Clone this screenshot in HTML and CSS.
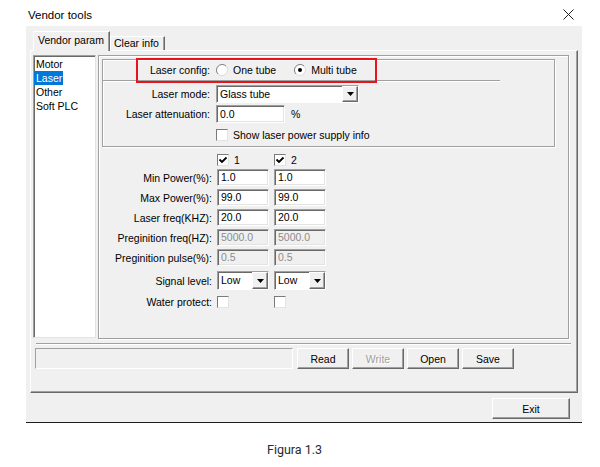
FILE: index.html
```html
<!DOCTYPE html>
<html lang="en">
    <head>
        <meta charset="utf-8">
        <title>Vendor tools</title>
        <link rel="stylesheet" href="styles.css">
    </head>
    <body>
        <div class="window">
            <div class="titlebar">
                <span class="title">Vendor tools</span>
                <svg class="close" width="11" height="11" viewBox="0 0 11 11">
                    <path d="M0.5 0.5L10.5 10.5M10.5 0.5L0.5 10.5" stroke="#1f1f1f" stroke-width="1"/>
                </svg>
            </div>
            <div class="client">
                <div class="tabs">
                    <div class="tab tab-active">Vendor param</div>
                    <div class="tab tab-idle">Clear info</div>
                </div>
                <div class="tab-panel">
                    <div class="panel-top">
                        <ul class="listbox">
                            <li><span>Motor</span></li>
                            <li class="selected"><span>Laser</span></li>
                            <li><span>Other</span></li>
                            <li><span>Soft PLC</span></li>
                        </ul>
                        <div class="param-box">
                            <div class="group">
                                <div class="row row-config">
                                    <span class="label">Laser config:</span>
                                    <span class="radio">
                                        <svg width="12" height="12" viewBox="0 0 12 12">
                                            <circle cx="6" cy="6" r="5.2" fill="#fff"/>
                                            <path d="M2 10A5.66 5.66 0 0 1 10 2" stroke="#808080" fill="none"/>
                                            <path d="M10 2A5.66 5.66 0 0 1 2 10" stroke="#dcdcdc" fill="none"/>
                                        </svg>
                                        One tube
                                    </span>
                                    <span class="radio radio-second">
                                        <svg width="12" height="12" viewBox="0 0 12 12">
                                            <circle cx="6" cy="6" r="5.2" fill="#fff"/>
                                            <path d="M2 10A5.66 5.66 0 0 1 10 2" stroke="#808080" fill="none"/>
                                            <path d="M10 2A5.66 5.66 0 0 1 2 10" stroke="#dcdcdc" fill="none"/>
                                            <circle cx="6" cy="6" r="2" fill="#000"/>
                                        </svg>
                                        Multi tube
                                    </span>
                                </div>
                                <div class="row row-mode">
                                    <span class="label">Laser mode:</span>
                                    <div class="select select-mode">
                                        <span class="select-text">Glass tube</span>
                                        <span class="drop"><svg width="7" height="4" viewBox="0 0 7 4"><path d="M0 0H7L3.5 4Z" fill="#000"/></svg></span>
                                    </div>
                                </div>
                                <div class="row row-atten">
                                    <span class="label">Laser attenuation:</span>
                                    <span class="field field-atten">0.0</span>
                                    <span class="unit">%</span>
                                </div>
                                <div class="row row-show">
                                    <span class="label"></span>
                                    <span class="check-label">
                                        <span class="checkbox"></span>
                                        Show laser power supply info
                                    </span>
                                </div>
                            </div>

                            <div class="tubes">
                                <div class="row tube-head">
                                    <span class="label"></span>
                                    <span class="cell check-label">
                                        <span class="checkbox"><svg width="10" height="10" viewBox="0 0 10 10"><path d="M1.5 4.5L4 7L8.5 2.5" stroke="#000" stroke-width="1.8" fill="none"/></svg></span>
                                        1
                                    </span>
                                    <span class="cell check-label">
                                        <span class="checkbox"><svg width="10" height="10" viewBox="0 0 10 10"><path d="M1.5 4.5L4 7L8.5 2.5" stroke="#000" stroke-width="1.8" fill="none"/></svg></span>
                                        2
                                    </span>
                                </div>
                                <div class="row tube-row">
                                    <span class="label">Min Power(%):</span>
                                    <span class="cell field">1.0</span>
                                    <span class="cell field">1.0</span>
                                </div>
                                <div class="row tube-row">
                                    <span class="label">Max Power(%):</span>
                                    <span class="cell field">99.0</span>
                                    <span class="cell field">99.0</span>
                                </div>
                                <div class="row tube-row">
                                    <span class="label">Laser freq(KHZ):</span>
                                    <span class="cell field">20.0</span>
                                    <span class="cell field">20.0</span>
                                </div>
                                <div class="row tube-row">
                                    <span class="label">Preginition freq(HZ):</span>
                                    <span class="cell field field-off">5000.0</span>
                                    <span class="cell field field-off">5000.0</span>
                                </div>
                                <div class="row tube-row">
                                    <span class="label">Preginition pulse(%):</span>
                                    <span class="cell field field-off">0.5</span>
                                    <span class="cell field field-off">0.5</span>
                                </div>
                                <div class="row tube-signal">
                                    <span class="label">Signal level:</span>
                                    <div class="cell select">
                                        <span class="select-text">Low</span>
                                        <span class="drop"><svg width="7" height="4" viewBox="0 0 7 4"><path d="M0 0H7L3.5 4Z" fill="#000"/></svg></span>
                                    </div>
                                    <div class="cell select">
                                        <span class="select-text">Low</span>
                                        <span class="drop"><svg width="7" height="4" viewBox="0 0 7 4"><path d="M0 0H7L3.5 4Z" fill="#000"/></svg></span>
                                    </div>
                                </div>
                                <div class="row tube-water">
                                    <span class="label">Water protect:</span>
                                    <span class="cell"><span class="checkbox"></span></span>
                                    <span class="cell"><span class="checkbox"></span></span>
                                </div>
                            </div>

                            <!-- annotation drawn over the dialog -->
                            <div class="mark"></div>
                        </div>
                    </div>
                    <div class="separator"></div>
                    <div class="panel-bottom">
                        <div class="status"></div>
                        <button class="btn">Read</button>
                        <button class="btn btn-off">Write</button>
                        <button class="btn">Open</button>
                        <button class="btn">Save</button>
                    </div>
                </div>
                <div class="footer">
                    <button class="btn btn-exit">Exit</button>
                </div>
            </div>
        </div>
        <div class="caption">Figura 1.3</div>
    </body>
</html>
```

FILE: styles.css
```css
body {
    margin: 0;
    background: #fff;
    font-family: "Liberation Sans", Arial, sans-serif;
    font-size: 10.5px;
    color: #000;
}

.window {
    width: 556px;
    margin-left: 26px;
}

.titlebar {
    height: 26px;
    display: flex;
    align-items: center;
    justify-content: space-between;
}

.title {
    padding: 3px 0 0 2px;
    font-size: 11.5px;
}

.close {
    margin: 3px 8px 0 0;
}

.client {
    height: 396px;
    background: #f0f0f0;
    border-bottom: 1px solid #1e1e1e;
}

/* tabs */
.tabs {
    display: flex;
    align-items: flex-end;
    height: 24px;
    padding-left: 7px;
}

.tab {
    box-sizing: border-box;
    background: #f0f0f0;
    border: 1px solid;
    border-color: #fff #696969 #f0f0f0 #fff;
    border-bottom: 0;
    box-shadow: inset -1px 0 #a0a0a0;
    padding-left: 4px;
}

.tab-active {
    position: relative;
    z-index: 1;
    width: 77px;
    height: 20px;
    margin-bottom: -1px;
    line-height: 17px;
}

.tab-idle {
    width: 55px;
    height: 14px;
    line-height: 13px;
    padding-left: 3px;
}

.tab-panel {
    box-sizing: border-box;
    width: 548px;
    height: 343px;
    margin-left: 4px;
    padding: 4px 0 0 2px;
    border: 1px solid;
    border-color: #fff #696969 #696969 #fff;
    box-shadow: inset -1px -1px #a0a0a0;
}

.panel-top {
    display: flex;
    align-items: flex-start;
}

/* left list */
.listbox {
    box-sizing: border-box;
    width: 63px;
    height: 283px;
    margin: 0;
    padding: 1px 0 0 0;
    list-style: none;
    background: #fff;
    border: 1px solid;
    border-color: #a0a0a0 #e3e3e3 #e3e3e3 #a0a0a0;
    box-shadow: inset 1px 1px #696969;
}

.listbox li {
    height: 14px;
    line-height: 14px;
}

.listbox span {
    display: inline-block;
    padding: 0 1px 0 2px;
}

.listbox .selected span {
    background: #0078d7;
    color: #fff;
}

/* right side */
.param-box {
    position: relative;
    box-sizing: border-box;
    width: 471px;
    height: 284px;
    margin-left: 2px;
    border: 1px solid #a0a0a0;
    box-shadow: inset 1px 1px #fff, 1px 1px #fff;
}

.group {
    box-sizing: border-box;
    width: 453px;
    height: 88px;
    margin: 3px 0 0 3px;
    border: 1px solid #a0a0a0;
    box-shadow: inset 1px 1px #fff, 1px 1px #fff;
}

.row {
    display: flex;
    align-items: center;
}

.label {
    flex: none;
    text-align: right;
    white-space: nowrap;
}

.group .label {
    width: 107px;
    margin-right: 6px;
}

.row-config {
    width: 397px;
    height: 20px;
    border-bottom: 1px solid #a0a0a0;
    box-shadow: 0 1px #fff;
}

.radio {
    display: flex;
    align-items: center;
    gap: 5px;
}

.radio-second {
    margin-left: 18px;
}

.row-mode {
    height: 18px;
    margin-top: 4px;
}

.row-atten {
    height: 18px;
    margin-top: 2px;
}

.row-show {
    height: 12px;
    margin-top: 6px;
}

.unit {
    margin-left: 6px;
}

/* inputs */
.field {
    box-sizing: border-box;
    display: block;
    width: 52px;
    height: 17px;
    padding-left: 3px;
    line-height: 15px;
    background: #fff;
    border: 1px solid;
    border-color: #a0a0a0 #fff #fff #a0a0a0;
    box-shadow: inset 1px 1px #696969, inset -1px -1px #e3e3e3;
}

.field-atten {
    width: 69px;
    height: 18px;
    line-height: 16px;
}

.field-off {
    background: #f0f0f0;
    color: #8c8c8c;
}

.select {
    box-sizing: border-box;
    display: flex;
    width: 52px;
    height: 19px;
    background: #fff;
    border: 1px solid;
    border-color: #a0a0a0 #fff #fff #a0a0a0;
    box-shadow: inset 1px 1px #696969;
}

.select-mode {
    width: 143px;
    height: 18px;
}

.select-text {
    flex: 1;
    padding: 1px 0 0 3px;
    line-height: 15px;
}

.drop {
    box-sizing: border-box;
    display: flex;
    align-items: center;
    justify-content: center;
    width: 16px;
    background: #f0f0f0;
    border: 1px solid;
    border-color: #fff #696969 #696969 #fff;
    box-shadow: inset -1px -1px #a0a0a0;
}

.check-label {
    display: flex;
    align-items: center;
    gap: 5px;
}

.checkbox {
    box-sizing: border-box;
    display: flex;
    align-items: center;
    justify-content: center;
    width: 12px;
    height: 12px;
    background: #fff;
    border: 1px solid;
    border-color: #7a7a7a #e3e3e3 #e3e3e3 #7a7a7a;
}

/* per tube grid */
.tubes {
    margin-top: 7px;
}

.tubes .label {
    width: 113px;
    margin-right: 5px;
}

.tubes .cell {
    width: 52px;
    flex: none;
}

.tubes .cell + .cell {
    margin-left: 5px;
}

.tube-head {
    height: 12px;
}

.tube-row {
    height: 17px;
    margin-top: 3px;
}

.tube-signal {
    height: 19px;
    margin-top: 5px;
}

.tube-water {
    height: 12px;
    margin-top: 6px;
}

.mark {
    position: absolute;
    left: 37px;
    top: 2px;
    box-sizing: border-box;
    width: 241px;
    height: 25px;
    border: 2px solid #e8131b;
}

.separator {
    width: 535px;
    margin: 4px 0 0 3px;
    border-top: 1px solid #a0a0a0;
    border-bottom: 1px solid #fff;
}

.panel-bottom {
    display: flex;
    margin: 3px 0 0 2px;
}

.status {
    box-sizing: border-box;
    width: 258px;
    height: 21px;
    margin-right: 4px;
    border: 1px solid;
    border-color: #a0a0a0 #fff #fff #a0a0a0;
}

.btn {
    box-sizing: border-box;
    width: 52px;
    height: 21px;
    margin: 0 3px 0 0;
    padding: 0;
    font-family: inherit;
    font-size: 10.5px;
    color: #000;
    background: #f0f0f0;
    border: 1px solid;
    border-color: #fff #696969 #696969 #fff;
    box-shadow: inset -1px -1px #a0a0a0;
}

.btn-off {
    color: #a0a0a0;
    text-shadow: 1px 1px #fff;
}

.footer {
    display: flex;
    justify-content: flex-end;
    padding: 5px 12px 0 0;
}

.btn-exit {
    width: 78px;
    margin: 0;
}

.caption {
    margin-top: 19px;
    padding-left: 267px;
    font-family: Roboto, "Liberation Sans", sans-serif;
    font-size: 12.5px;
    line-height: 16px;
    color: #2a2a2a;
}
```
